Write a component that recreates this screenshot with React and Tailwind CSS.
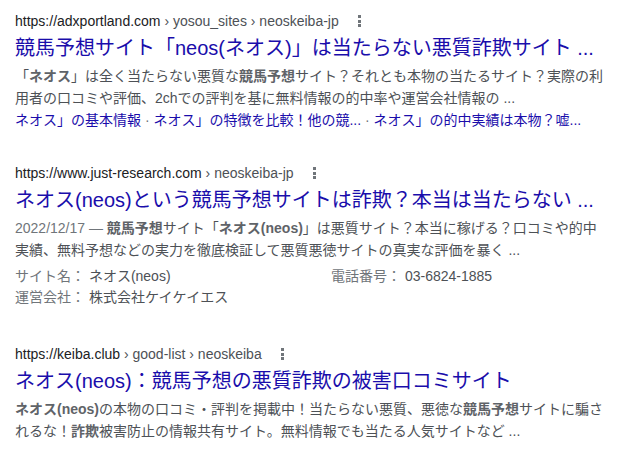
import React from 'react';

const font = 'font-["Liberation_Sans","Noto_Sans_CJK_JP",sans-serif]';

const Dots = () => (
    <span className="ml-[19px] flex flex-col gap-[1.5px]">
        <span className="block w-[3px] h-[3px] bg-[#70757a]" />
        <span className="block w-[3px] h-[3px] bg-[#70757a]" />
        <span className="block w-[3px] h-[3px] bg-[#70757a]" />
    </span>
);

const UrlRow = ({ domain, path }) => (
    <div className="flex items-center h-[22px] text-[14px] leading-[22px]">
        <span className="whitespace-pre">
            <span className="text-[#202124]">{domain}</span>
            <span className="text-[#4d5156]">{path}</span>
        </span>
        <Dots />
    </div>
);

const Title = ({ children, className = '' }) => (
    <a href="#" className={`block whitespace-nowrap text-[20px] leading-[26px] text-[#1a0dab] ${className}`}>
        {children}
    </a>
);

const B = ({ children }) => <b className="font-bold text-[#5f6368]">{children}</b>;

const Sep = () => <span className="text-[#70757a]"> · </span>;

export default function App() {
    return (
        <div className={`min-h-screen bg-white pl-[15px] pt-[10px] ${font}`}>
            <div className="w-[592px]">
                {/* result 1 */}
                <UrlRow domain="https://adxportland.com" path=" › yosou_sites › neoskeiba-jp" />
                <Title className="mt-[3px]">競馬予想サイト「neos(ネオス)」は当たらない悪質詐欺サイト ...</Title>
                <p className="mt-[4px] text-[14px] leading-[22px] text-[#4d5156]">
                    「<B>ネオス</B>」は全く当たらない悪質な<B>競馬予想</B>サイト？それとも本物の当たるサイト？実際の利用者の口コミや評価、2chでの評判を基に無料情報の的中率や運営会社情報の ...
                </p>
                <div className="whitespace-nowrap text-[14px] leading-[22px] text-[#1a0dab]">
                    <a href="#">ネオス」の基本情報</a>
                    <Sep />
                    <a href="#">ネオス」の特徴を比較！他の競...</a>
                    <Sep />
                    <a href="#">ネオス」の的中実績は本物？嘘...</a>
                </div>

                {/* result 2 */}
                <div className="mt-[31px]">
                    <UrlRow domain="https://www.just-research.com" path=" › neoskeiba-jp" />
                    <Title className="mt-[3px]">ネオス(neos)という競馬予想サイトは詐欺？本当は当たらない ...</Title>
                    <p className="mt-[4px] text-[14px] leading-[22px] text-[#4d5156]">
                        <span className="text-[#70757a]">2022/12/17 — </span>
                        <B>競馬予想</B>サイト「<B>ネオス(neos)</B>」は悪質サイト？本当に稼げる？口コミや的中実績、無料予想などの実力を徹底検証して悪質悪徳サイトの真実な評価を暴く ...
                    </p>
                    <div className="mt-[5px] grid grid-cols-[316px_1fr] text-[14px] leading-[21px] text-[#4d5156]">
                        <div>
                            <span className="text-[#70757a]">サイト名： </span>ネオス(neos)
                        </div>
                        <div>
                            <span className="text-[#70757a]">電話番号： </span>03-6824-1885
                        </div>
                        <div>
                            <span className="text-[#70757a]">運営会社： </span>株式会社ケイケイエス
                        </div>
                    </div>
                </div>

                {/* result 3 */}
                <div className="mt-[35px]">
                    <UrlRow domain="https://keiba.club" path=" › good-list › neoskeiba" />
                    <Title className="mt-[3px]">ネオス(neos)：競馬予想の悪質詐欺の被害口コミサイト</Title>
                    <p className="mt-[4px] text-[14px] leading-[22px] text-[#4d5156]">
                        <B>ネオス(neos)</B>の本物の口コミ・評判を掲載中！当たらない悪質、悪徳な<B>競馬予想</B>サイトに騙されるな！<B>詐欺</B>被害防止の情報共有サイト。無料情報でも当たる人気サイトなど ...
                    </p>
                </div>
            </div>
        </div>
    );
}
